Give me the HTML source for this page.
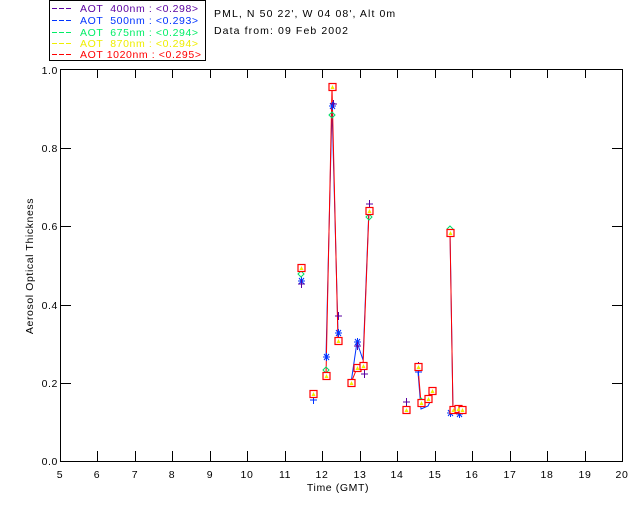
<!DOCTYPE html>
<html><head><style>
html,body{margin:0;padding:0;background:#fff;width:640px;height:512px;overflow:hidden}
svg{display:block}
text{font-family:"Liberation Sans",sans-serif;font-size:10.5px;letter-spacing:0.6px}
</style></head><body>
<svg width="640" height="512" viewBox="0 0 640 512" xmlns="http://www.w3.org/2000/svg">
<!-- legend -->
<rect x="49.5" y="0.5" width="156" height="60" fill="none" stroke="#000"/>
<g stroke-width="1" stroke-dasharray="5,2">
<line x1="52" y1="8.5" x2="72" y2="8.5" stroke="#5a00a0"/>
<line x1="52" y1="20.5" x2="72" y2="20.5" stroke="#0033ff"/>
<line x1="52" y1="32.5" x2="72" y2="32.5" stroke="#00ee66"/>
<line x1="52" y1="43.5" x2="72" y2="43.5" stroke="#eeee00"/>
<line x1="52" y1="54.5" x2="72" y2="54.5" stroke="#ff0000"/>
</g>
<text x="80" y="12" fill="#5a00a0" xml:space="preserve">AOT  400nm : &lt;0.298&gt;</text>
<text x="80" y="24" fill="#0033ff" xml:space="preserve">AOT  500nm : &lt;0.293&gt;</text>
<text x="80" y="36" fill="#00ee66" xml:space="preserve">AOT  675nm : &lt;0.294&gt;</text>
<text x="80" y="47" fill="#eeee00" xml:space="preserve">AOT  870nm : &lt;0.294&gt;</text>
<text x="80" y="58" fill="#ff0000" xml:space="preserve">AOT 1020nm : &lt;0.295&gt;</text>
<text x="214" y="17" fill="#000" style="letter-spacing:1.1px">PML, N 50 22', W 04 08', Alt 0m</text>
<text x="214" y="34" fill="#000" style="letter-spacing:1.1px">Data from: 09 Feb 2002</text>
<!-- axes -->
<rect x="60.5" y="69.5" width="562" height="392" fill="none" stroke="#000"/>
<g stroke="#000">
<path d="M97.5 461v-10M135.5 461v-10M172.5 461v-10M210.5 461v-10M247.5 461v-10M285.5 461v-10M322.5 461v-10M360.5 461v-10M397.5 461v-10M435.5 461v-10M472.5 461v-10M510.5 461v-10M547.5 461v-10M585.5 461v-10"/>
<path d="M97.5 70v8M135.5 70v8M172.5 70v8M210.5 70v8M247.5 70v8M285.5 70v8M322.5 70v8M360.5 70v8M397.5 70v8M435.5 70v8M472.5 70v8M510.5 70v8M547.5 70v8M585.5 70v8"/>
<path d="M61 383.5h10M61 305.5h10M61 226.5h10M61 148.5h10M622 383.5h-10M622 305.5h-10M622 226.5h-10M622 148.5h-10"/>
</g>
<g fill="#000" text-anchor="middle">
<text x="60" y="478">5</text><text x="97" y="478">6</text><text x="135" y="478">7</text><text x="172" y="478">8</text><text x="210" y="478">9</text><text x="247" y="478">10</text><text x="285" y="478">11</text><text x="322" y="478">12</text><text x="360" y="478">13</text><text x="397" y="478">14</text><text x="435" y="478">15</text><text x="472" y="478">16</text><text x="510" y="478">17</text><text x="547" y="478">18</text><text x="585" y="478">19</text><text x="622" y="478">20</text>
<text x="338" y="491">Time (GMT)</text>
</g>
<g fill="#000" text-anchor="end">
<text x="58" y="465">0.0</text><text x="58" y="387">0.2</text><text x="58" y="309">0.4</text><text x="58" y="230">0.6</text><text x="58" y="152">0.8</text><text x="58" y="74">1.0</text>
</g>
<text x="0" y="0" fill="#000" text-anchor="middle" transform="translate(33,266) rotate(-90)">Aerosol Optical Thickness</text>
<!-- data lines -->
<g fill="none" stroke-width="1">
<polyline stroke="#0033ff" points="326,357 332,106 338,333"/>
<polyline stroke="#0033ff" points="351,383 357,342 363,360 369,207"/>
<polyline stroke="#0033ff" points="418,372 421,409 428,406 432,398"/>
<polyline stroke="#0033ff" points="450,230 453,412 458,413 462,414"/>
<polyline stroke="#ff0000" points="326,376 332,87 338,341"/>
<polyline stroke="#ff0000" points="351,383 357,368 363,366 369,211"/>
<polyline stroke="#ff0000" points="418,367 421,403 428,399 432,391"/>
<polyline stroke="#ff0000" points="450,233 453,410 458,409 462,410"/>
</g>
<g stroke="#0033ff" stroke-width="1" fill="none">
<path d="M298 281h7M301.5 277v8M299 278l5 6M304 278l-5 6"/>
<path d="M310 400h7M313.5 396v8"/>
<path d="M323 357h7M326.5 353v8M324 354l5 6M329 354l-5 6"/>
<path d="M329 106h7M332.5 102v8M330 103l5 6M335 103l-5 6"/>
<path d="M335 333h7M338.5 329v8M336 330l5 6M341 330l-5 6"/>
<path d="M354 342h7M357.5 338v8M355 339l5 6M360 339l-5 6"/>
<path d="M415 372h7M418.5 368v8"/>
<path d="M447 413h7M450.5 409v8M448 410l5 6M453 410l-5 6"/>
<path d="M456 414h7M459.5 410v8M457 411l5 6M462 411l-5 6"/>
</g>
<g stroke="#5a00a0" stroke-width="1" fill="none">
<path d="M298 284h7M301.5 280v8M330 104h7M333.5 100v8M335 316h7M338.5 312v8M354 346h7M357.5 342v8M366 204h7M369.5 200v8M403 402h7M406.5 398v8M415 366h7M418.5 362v8M361 374h7M364.5 370v8"/>
</g>
<g stroke="#00dd66" fill="none">
<path d="M301 271l3 3-3 3-3-3zM326 367l3 3-3 3-3-3zM332 112l3 3-3 3-3-3zM369 214l3 3-3 3-3-3zM450 226l3 3-3 3-3-3zM421 398l3 3-3 3-3-3z"/>
</g>
<!-- red squares -->
<g stroke="#ff0000" stroke-width="1.2" fill="#fff">
<rect x="298" y="264.5" width="7" height="7"/>
<rect x="310" y="390.5" width="7" height="7"/>
<rect x="323" y="372.5" width="7" height="7"/>
<rect x="329" y="83.5" width="7" height="7"/>
<rect x="335" y="337.5" width="7" height="7"/>
<rect x="348" y="379.5" width="7" height="7"/>
<rect x="354" y="364.5" width="7" height="7"/>
<rect x="360" y="362.5" width="7" height="7"/>
<rect x="366" y="207.5" width="7" height="7"/>
<rect x="403" y="406.5" width="7" height="7"/>
<rect x="415" y="363.5" width="7" height="7"/>
<rect x="418" y="399.5" width="7" height="7"/>
<rect x="425" y="395.5" width="7" height="7"/>
<rect x="429" y="387.5" width="7" height="7"/>
<rect x="447" y="229.5" width="7" height="7"/>
<rect x="450" y="406.5" width="7" height="7"/>
<rect x="455" y="405.5" width="7" height="7"/>
<rect x="459" y="406.5" width="7" height="7"/>
</g>
<g fill="#eeee00">
<path d="M301.5 266l2 4h-4zM313.5 392l2 4h-4zM326.5 374l2 4h-4zM332.5 85l2 4h-4zM338.5 339l2 4h-4zM351.5 381l2 4h-4zM357.5 366l2 4h-4zM363.5 364l2 4h-4zM369.5 209l2 4h-4zM406.5 408l2 4h-4zM418.5 365l2 4h-4zM421.5 401l2 4h-4zM428.5 397l2 4h-4zM432.5 389l2 4h-4zM450.5 231l2 4h-4zM453.5 408l2 4h-4zM458.5 407l2 4h-4zM462.5 408l2 4h-4z"/>
</g>
</svg>
</body></html>
